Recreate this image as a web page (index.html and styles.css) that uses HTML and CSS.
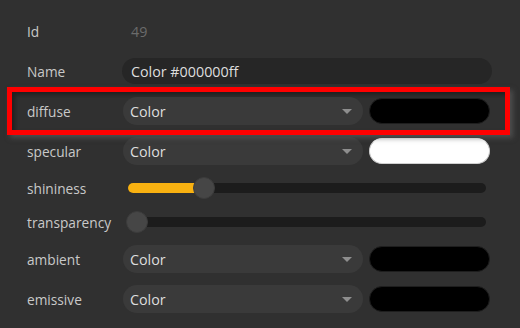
FILE: index.html
```html
<!DOCTYPE html>
<html>
<head>
<meta charset="utf-8">
<link rel="stylesheet" href="styles.css">
</head>
<body>
<div class="panel">
  <div class="row">
    <span class="label">Id</span>
    <span class="readonly">49</span>
  </div>
  <div class="row">
    <span class="label">Name</span>
    <div class="input">Color #000000ff</div>
  </div>
  <div class="row selected">
    <span class="label">diffuse</span>
    <div class="select"><span>Color</span><span class="arrow"></span></div>
    <div class="swatch black"></div>
  </div>
  <div class="row">
    <span class="label">specular</span>
    <div class="select"><span>Color</span><span class="arrow"></span></div>
    <div class="swatch white"></div>
  </div>
  <div class="row slim">
    <span class="label">shininess</span>
    <div class="slider">
      <div class="track"></div>
      <div class="fill" style="width: 76px"></div>
      <div class="thumb" style="left: 67px"></div>
    </div>
  </div>
  <div class="row slim">
    <span class="label">transparency</span>
    <div class="slider">
      <div class="track"></div>
      <div class="thumb" style="left: 0px"></div>
    </div>
  </div>
  <div class="row">
    <span class="label">ambient</span>
    <div class="select"><span>Color</span><span class="arrow"></span></div>
    <div class="swatch black"></div>
  </div>
  <div class="row">
    <span class="label">emissive</span>
    <div class="select"><span>Color</span><span class="arrow"></span></div>
    <div class="swatch black"></div>
  </div>
</div>
</body>
</html>
```

FILE: styles.css
```css
html, body {
  margin: 0;
  padding: 0;
  background: #303030;
  width: 520px;
  height: 328px;
  overflow: hidden;
}
body {
  font-family: "Open Sans", "Noto Sans", sans-serif;
}
.panel {
  display: flex;
  flex-direction: column;
  padding: 11px 0 0 7px;
}
.row {
  box-sizing: border-box;
  width: 503px;
  height: 40px;
  padding: 0 0 0 20px;
  display: flex;
  align-items: center;
}
.row.slim {
  height: 34px;
}
.row.selected {
  height: 48px;
  margin: -4px 0;
  border: 5px solid #ff0000;
  padding-left: 15px;
  box-shadow: inset 3px 3px 4px rgba(0, 0, 0, 0.35), 3px 3px 5px rgba(90, 90, 90, 0.7);
  position: relative;
  z-index: 1;
}
.label {
  width: 95px;
  flex: none;
  font-size: 13.7px;
  color: #c9c9c9;
}
.readonly {
  padding-left: 9px;
  font-size: 14.3px;
  color: #6b6b6b;
}
.input {
  box-sizing: border-box;
  width: 370px;
  height: 26px;
  border-radius: 13px;
  background: #262626;
  color: #dedede;
  font-size: 14.3px;
  padding-left: 9px;
  display: flex;
  align-items: center;
}
.select {
  box-sizing: border-box;
  width: 240px;
  height: 28px;
  margin-left: 1px;
  border-radius: 14px;
  background: #3a3a3a;
  color: #dedede;
  font-size: 14.3px;
  padding: 0 11px 0 7px;
  display: flex;
  align-items: center;
  justify-content: space-between;
}
.arrow {
  width: 0;
  height: 0;
  border-left: 5px solid transparent;
  border-right: 5px solid transparent;
  border-top: 5px solid #8e8e8e;
}
.swatch {
  box-sizing: border-box;
  width: 121px;
  height: 26px;
  margin-left: 6px;
  border-radius: 13px;
}
.swatch.black {
  background: #000;
  border: 1px solid #1e1e1e;
}
.swatch.white {
  background: #fff;
  border: 1px solid #d0d0d0;
  border-top-color: #fff;
}
.slider {
  position: relative;
  width: 360px;
  height: 24px;
  margin-left: 4px;
}
.track {
  position: absolute;
  left: 2px;
  right: 0;
  top: 7px;
  height: 10px;
  border-radius: 5px;
  background: #1c1c1c;
}
.fill {
  position: absolute;
  left: 2px;
  top: 7px;
  height: 10px;
  border-radius: 5px;
  background: #f8b111;
}
.thumb {
  position: absolute;
  top: 1px;
  box-sizing: border-box;
  width: 22px;
  height: 22px;
  border-radius: 50%;
  background: #464646;
  border: 1px solid #3c3c3c;
}
```
